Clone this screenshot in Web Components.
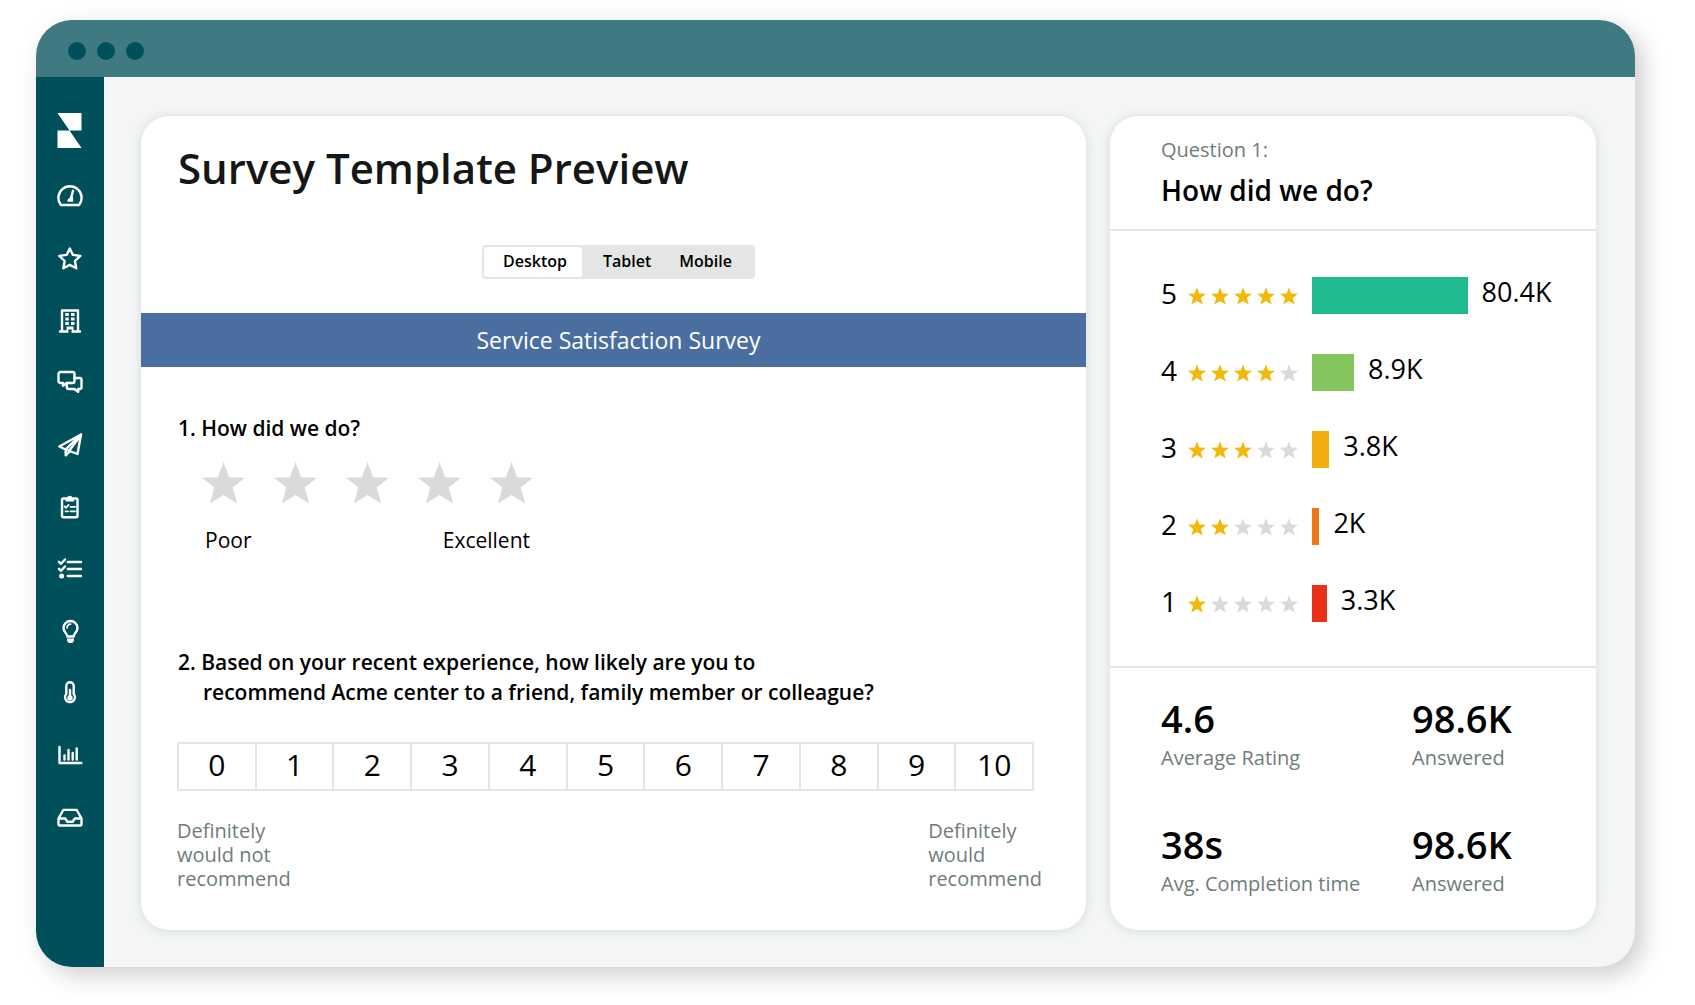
<!DOCTYPE html>
<html lang="en">
<head>
<meta charset="utf-8">
<meta name="viewport" content="width=device-width, initial-scale=1">
<title>Survey Template Preview</title>
<style>
  html, body { margin: 0; }
  body {
    display: flex;
    box-sizing: border-box;
    min-height: 100vh;
    padding: 20px 60px 38px 36px;
    background: #fff;
    color: #000;
    font-family: "Open Sans", "Noto Sans", sans-serif;
    font-size: 20px;
    --teal: #00505c;
    --teal-soft: #3f7a82;
    --canvas: #f3f5f6;
    --line: #e4e6e6;
    --muted: #6f7c7a;
    --gold: #f2b90c;
    --empty: #dadada;
  }
</style>
</head>
<body>
<app-window>
  <side-nav slot="nav"></side-nav>
  <survey-card>
    <view-tabs slot="tabs"></view-tabs>
    <survey-question>
      <span slot="title">1. How did we do?</span>
      <star-input></star-input>
    </survey-question>
    <survey-question>
      <span slot="title">2. Based on your recent experience, how likely are you to<br>recommend Acme center to a friend, family member or colleague?</span>
      <number-scale></number-scale>
    </survey-question>
  </survey-card>
  <results-card>
    <span slot="eyebrow">Question 1:</span>
    <span slot="heading">How did we do?</span>
    <rating-row stars="5" share="63" color="#20ba90">80.4K</rating-row>
    <rating-row stars="4" share="17" color="#84c65d">8.9K</rating-row>
    <rating-row stars="3" share="7" color="#f0ad0e">3.8K</rating-row>
    <rating-row stars="2" share="3" color="#ef7615">2K</rating-row>
    <rating-row stars="1" share="6" color="#ea3017">3.3K</rating-row>
    <stat-figure slot="stats" label="Average Rating">4.6</stat-figure>
    <stat-figure slot="stats" label="Answered">98.6K</stat-figure>
    <stat-figure slot="stats" label="Avg. Completion time">38s</stat-figure>
    <stat-figure slot="stats" label="Answered">98.6K</stat-figure>
  </results-card>
</app-window>

<script>
const STAR = '<svg viewBox="0 0 43 42" aria-hidden="true"><path fill="currentColor" d="M21.5 0 27 15.3 43 15.8 30.6 25.6 35.2 41.5 21.5 33 7.8 41.5 12.4 25.6 0 15.8 16 15.3Z"/></svg>';

function define(name, html) {
  customElements.define(name, class extends HTMLElement {
    constructor() {
      super();
      this.attachShadow({ mode: 'open' });
    }
    connectedCallback() {
      this.shadowRoot.innerHTML = typeof html === 'function' ? html(this) : html;
    }
  });
}

define('app-window', `
  <style>
    :host { display: flex; flex-direction: column; flex: 1; min-width: 0; border-radius: 36px; overflow: hidden;
      background: var(--canvas); box-shadow: 8px 8px 24px rgba(0, 0, 0, .2); }
    header { display: flex; align-items: center; gap: 11px; height: 57px; padding: 0 32px; background: var(--teal-soft); }
    i { width: 18px; height: 18px; margin-top: 5px; border-radius: 50%; background: var(--teal); }
    .body { display: flex; flex: 1; }
    main { display: grid; grid-template-columns: 35fr 18fr; gap: 24px; flex: 1; min-width: 0; padding: 39px 39px 37px 37px; }
  </style>
  <header><i></i><i></i><i></i></header>
  <div class="body"><slot name="nav"></slot><main><slot></slot></main></div>
`);

const NAV = [
  ['Dashboard', '<path d="M3.9 21A11.600 11.600 0 1 1 22.100 21Z"/><path d="M16 6.800 13.800 14.500"/><path class="f" d="M13.400 12.400h2.600l.2 5.400h-5.600c-.8-1.800.7-3.600 2.200-3.800z"/>'],
  ['Reviews', '<path d="M12.800 2.500 15.900 8.900 23.300 9.900 17.900 15 19.300 22.300 12.800 18.900 6.300 22.300 7.700 15 2.300 9.900 9.700 8.900Z"/>'],
  ['Listings', '<path d="M5 23V2.500h16V23M3 23.500h7.500M15.500 23.500H23"/><path class="f" d="M8.300 5h3.500v3h-3.500zM14 5h3.500v3h-3.500zM8.300 9.500h3.500v3h-3.500zM14 9.500h3.500v3h-3.500zM8.300 14h3.500v3h-3.500zM14 14h3.500v3h-3.500zM9.500 18.500h7v6H15v-3h-4v3H9.500z"/>'],
  ['Messages', '<path d="M3.500 2h12a2 2 0 0 1 2 2v7a2 2 0 0 1-2 2H9.800L6 15.800V13H3.500a2 2 0 0 1-2-2V4a2 2 0 0 1 2-2Z"/><path d="M17.500 8h5a2 2 0 0 1 2 2v7a2 2 0 0 1-2 2h-1.300v2.800L17.300 19h-5.500a2 2 0 0 1-2-2v-4"/>'],
  ['Campaigns', '<path d="M24 2.500 2.300 14.500 8.500 17.500 20.500 22Z"/><path d="M24 2.500 8.700 17.300V23.300L13 19.200"/><path d="M22.500 5 12.500 18.300"/>'],
  ['Surveys', '<rect x="5" y="4.500" width="15.500" height="18.700" rx="1.500"/><path class="f" d="M8.500 4H10a2.800 2.800 0 0 1 5.500 0H17v3.600H8.500z"/><path class="t" d="m7.600 12.500 1.400 1.400 2.600-3M13.500 12.800h4.500M13.500 17.300h4.500M8.500 17.300h2.500"/>'],
  ['Tasks', '<path d="m2 5.800 2 2 4-4.300M2 12.800l2 2 4-4.300M10.800 6H24M10.800 13H24M10.800 20H24"/><circle class="f" cx="4.600" cy="20" r="2.500"/>'],
  ['Insights', '<path d="M10.300 18.500c0-3-3.800-4.500-3.800-8.500a7 7 0 0 1 14 0c0 4-3.800 5.500-3.800 8.500Z"/><path class="t" d="M10 9.800a3.500 3.500 0 0 1 3.500-3.600"/><path class="f" d="M10 20.500h7v2.200L15.300 25h-3.600L10 22.700z"/>'],
  ['Benchmarks', '<path d="M9.300 14V6a3.700 3.700 0 0 1 7.400 0v8a4.900 4.900 0 1 1-7.400 0Z"/><path d="M13 10v7"/><circle class="f" cx="13" cy="18" r="2.700"/>'],
  ['Reports', '<path d="M2.500 5v16H24.300M7.500 13.500v4M11.500 8v9.500M15.700 11v6.500M19.700 6.500v11"/>'],
  ['Inbox', '<path d="M1.500 14.500 6 6.500q.3-.6 1-.6h12q.7 0 1 .6l4.500 8v5.500q0 1.500-1.500 1.500H3q-1.500 0-1.500-1.500Z"/><path d="M2 14.500h6.200l2 3.200h5.600l2-3.200H24"/>']
];

define('side-nav', `
  <style>
    :host { display: block; width: 68px; flex: none; background: var(--teal); color: #fff; }
    nav { display: flex; flex-direction: column; align-items: center; gap: 36px; padding-top: 36px; }
    a { display: block; color: inherit; }
    svg { display: block; width: 26px; height: 26px; fill: none; stroke: currentColor; stroke-width: 2.4; stroke-linejoin: round; stroke-linecap: round; }
    .logo svg { height: 35px; fill: currentColor; stroke: none; }
    .f { fill: currentColor; stroke: none; }
    .t { stroke-width: 1.8; }
  </style>
  <nav aria-label="Main">
    <a class="logo" href="#" aria-label="Home"><svg viewBox="0 0 26 35"><path d="M.5 0H24.500V17.500H12.500ZM.5 17.500H12.500L24.500 35H.5Z"/></svg></a>
    ${NAV.map(([name, art]) => `<a href="#" aria-label="${name}"><svg viewBox="0 0 26 26">${art}</svg></a>`).join('')}
  </nav>
`);

const CARD = `background: #fff; border-radius: 28px; box-shadow: 0 1px 12px rgba(20, 40, 30, .12);`;

define('survey-card', `
  <style>
    :host { display: block; ${CARD} padding-bottom: 36px; }
    h1 { margin: 0; padding: 24px 37px 49px; font-size: 42px; line-height: 56px; font-weight: 600; color: #151717; }
    .tabs, h2 { display: flex; justify-content: center; padding-left: 10px; }
    h2 { margin: 34px 0 46px; background: #4b6ea0; color: #fff; font-size: 23px; line-height: 54px; font-weight: 400; }
    .questions { display: flex; flex-direction: column; gap: 92px; padding: 0 36px; }
  </style>
  <h1>Survey Template Preview</h1>
  <div class="tabs"><slot name="tabs"></slot></div>
  <h2>Service Satisfaction Survey</h2>
  <div class="questions"><slot></slot></div>
`);

define('view-tabs', `
  <style>
    :host { display: flex; padding: 2px; border-radius: 4px; background: var(--line); }
    button { margin: 0; padding: 0 14px 2px; border: 0; border-radius: 3px; background: none; color: inherit; font: 600 16px/28px "Open Sans", "Noto Sans", sans-serif; }
    button[aria-pressed=true] { padding: 0 15px 2px 19px; margin-right: 7px; background: #fff; }
    button:last-child { padding-right: 21px; }
  </style>
  <button type="button" aria-pressed="true">Desktop</button><button type="button" aria-pressed="false">Tablet</button><button type="button" aria-pressed="false">Mobile</button>
`);

define('survey-question', `
  <style>
    :host { display: block; }
    h3 { margin: 0; padding-left: 26px; text-indent: -25px; font-size: 21px; line-height: 30px; font-weight: 600; }
  </style>
  <h3><slot name="title"></slot></h3>
  <slot></slot>
`);

define('star-input', `
  <style>
    :host { display: inline-block; margin: 19px 0 0 25px; }
    .stars { display: flex; gap: 29px; color: var(--empty); }
    label { display: grid; }
    label > * { grid-area: 1 / 1; }
    input { appearance: none; margin: 0; }
    svg { display: block; width: 43px; height: 42px; }
    .ends { display: flex; justify-content: space-between; padding: 0 3px; margin-top: 21px; font-size: 21px; line-height: 30px; }
  </style>
  <div class="stars" role="radiogroup" aria-label="Rating">
    ${[1, 2, 3, 4, 5].map(n => `<label><input type="radio" name="rating" value="${n}" aria-label="${n} of 5">${STAR}</label>`).join('')}
  </div>
  <div class="ends"><span>Poor</span><span>Excellent</span></div>
`);

define('number-scale', `
  <style>
    :host { display: block; margin-top: 35px; }
    .scale { display: flex; margin-right: 16px; border: solid var(--line); border-width: 2px 0 2px 2px; }
    label { display: grid; flex: 1; padding-bottom: 4px; border-right: 2px solid var(--line); font-size: 30px; line-height: 41px; text-align: center; }
    label > * { grid-area: 1 / 1; }
    input { appearance: none; margin: 0; }
    .ends { display: flex; justify-content: space-between; padding-right: 8px; margin-top: 28px; line-height: 24px; color: var(--muted); }
  </style>
  <div class="scale" role="radiogroup" aria-label="Likelihood">
    ${Array.from({ length: 11 }, (_, n) => `<label><input type="radio" name="score" value="${n}"><span>${n}</span></label>`).join('')}
  </div>
  <div class="ends"><span>Definitely<br>would not<br>recommend</span><span>Definitely<br>would<br>recommend</span></div>
`);

define('results-card', `
  <style>
    :host { display: block; ${CARD} }
    header { padding: 22px 51px 20px; border-bottom: 2px solid var(--line); }
    p { margin: 0 0 9px; line-height: 24px; color: var(--muted); }
    h2 { margin: 0; font-size: 28px; line-height: 38px; font-weight: 600; }
    .rows { display: flex; flex-direction: column; gap: 40px; padding: 46px 37px 44px 51px; }
    .stats { display: grid; grid-template-columns: 251fr 184fr; gap: 48px 0; padding: 24px 0 32px 51px; border-top: 2px solid var(--line); }
  </style>
  <header><p><slot name="eyebrow"></slot></p><h2><slot name="heading"></slot></h2></header>
  <div class="rows"><slot></slot></div>
  <div class="stats"><slot name="stats"></slot></div>
`);

define('rating-row', el => {
  const filled = Number(el.getAttribute('stars'));
  return `
  <style>
    :host { display: flex; height: 37px; }
    .count { width: 27px; font-size: 28px; line-height: 32px; }
    .stars { display: flex; align-items: center; gap: 5px; margin-right: 14px; color: var(--empty); }
    .on { color: var(--gold); }
    .stars svg { display: block; width: 18px; height: 18px; }
    .track { display: flex; flex: 1; gap: 14px; }
    .bar { flex: none; width: ${el.getAttribute('share')}%; background: ${el.getAttribute('color')}; }
    .value { font-size: 27px; line-height: 30px; }
  </style>
  <span class="count">${filled}</span>
  <span class="stars">${[1, 2, 3, 4, 5].map(n => `<span class="${n <= filled ? 'on' : ''}">${STAR}</span>`).join('')}</span>
  <span class="track"><span class="bar"></span><span class="value"><slot></slot></span></span>`;
});

define('stat-figure', el => `
  <style>
    :host { display: block; }
    strong { display: block; margin-bottom: 1px; font-size: 38px; line-height: 53px; font-weight: 600; }
    span { display: block; line-height: 24px; color: var(--muted); white-space: nowrap; }
  </style>
  <strong><slot></slot></strong><span>${el.getAttribute('label')}</span>
`);
</script>
</body>
</html>
